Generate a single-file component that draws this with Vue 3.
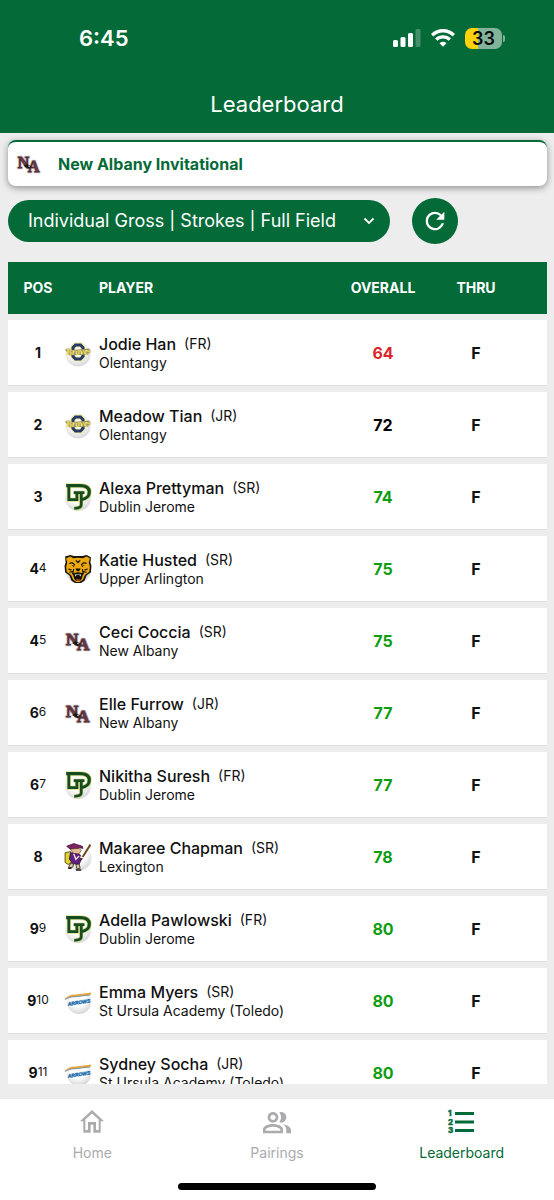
<script setup>
import { ref } from 'vue'

const view = ref('gross')

const players = [
  { pos: 1, order: '', name: 'Jodie Han', year: 'FR', school: 'Olentangy', logo: 'olentangy', score: 64, tone: 'under' },
  { pos: 2, order: '', name: 'Meadow Tian', year: 'JR', school: 'Olentangy', logo: 'olentangy', score: 72, tone: 'even' },
  { pos: 3, order: '', name: 'Alexa Prettyman', year: 'SR', school: 'Dublin Jerome', logo: 'jerome', score: 74, tone: 'over' },
  { pos: 4, order: '4', name: 'Katie Husted', year: 'SR', school: 'Upper Arlington', logo: 'arlington', score: 75, tone: 'over' },
  { pos: 4, order: '5', name: 'Ceci Coccia', year: 'SR', school: 'New Albany', logo: 'albany', score: 75, tone: 'over' },
  { pos: 6, order: '6', name: 'Elle Furrow', year: 'JR', school: 'New Albany', logo: 'albany', score: 77, tone: 'over' },
  { pos: 6, order: '7', name: 'Nikitha Suresh', year: 'FR', school: 'Dublin Jerome', logo: 'jerome', score: 77, tone: 'over' },
  { pos: 8, order: '', name: 'Makaree Chapman', year: 'SR', school: 'Lexington', logo: 'lexington', score: 78, tone: 'over' },
  { pos: 9, order: '9', name: 'Adella Pawlowski', year: 'FR', school: 'Dublin Jerome', logo: 'jerome', score: 80, tone: 'over' },
  { pos: 9, order: '10', name: 'Emma Myers', year: 'SR', school: 'St Ursula Academy (Toledo)', logo: 'ursula', score: 80, tone: 'over' },
  { pos: 9, order: '11', name: 'Sydney Socha', year: 'JR', school: 'St Ursula Academy (Toledo)', logo: 'ursula', score: 80, tone: 'over' },
]
</script>

<template>
  <div class="screen">
    <svg class="defs" width="0" height="0" aria-hidden="true">
      <defs>
        <radialGradient id="ball" cx="0.45" cy="0.35" r="0.65">
          <stop offset="0.5" stop-color="#fff" />
          <stop offset="1" stop-color="#d6d6da" />
        </radialGradient>
        <symbol id="logo-albany" viewBox="0 0 28 28">
          <g font-family="Liberation Serif, serif" font-weight="700" stroke-linejoin="round">
            <g fill="#c9bfc1" stroke="#c9bfc1" stroke-width="2.600">
              <text x="2" y="18" font-size="17">N</text>
              <text x="13" y="23" font-size="17">A</text>
            </g>
            <g fill="#6f3740" stroke="#54303a" stroke-width="0.900">
              <text x="2" y="18" font-size="17">N</text>
              <text x="13" y="23" font-size="17">A</text>
            </g>
          </g>
          <path d="M8 16l4-2 5 3-3 2.500z" fill="#1d1517" />
          <path d="M13 16l2 1" stroke="#fff" stroke-width="0.800" />
        </symbol>
        <symbol id="logo-olentangy" viewBox="0 0 28 28">
          <circle cx="14" cy="15" r="12.500" fill="url(#ball)" />
          <path d="M11.500 6h5l2.500 2.500v9L16.500 20h-5L9 17.500v-9z" fill="#fff" stroke="#f0e79a" stroke-width="5" />
          <path d="M11.500 6h5l2.500 2.500v9L16.500 20h-5L9 17.500v-9z" fill="none" stroke="#263a66" stroke-width="3" />
          <path d="M1 10.500q4-2 7 .5l17-1.500 2 2.500-2.500 3.500L5 16.500z" fill="#9a9560" />
          <text x="2" y="15.500" font-family="Liberation Serif, serif" font-size="9" font-style="italic" font-weight="700" fill="#f8e36b" transform="rotate(-3 14 14)">Braves</text>
        </symbol>
        <symbol id="logo-jerome" viewBox="0 0 26 26">
          <circle cx="13" cy="14" r="12" fill="url(#ball)" />
          <g fill="none" stroke-linejoin="miter">
            <path d="M2 2.500H15c6 0 8.500 2.500 8.500 6s-3 6.500-8 7" stroke="#dfe29a" stroke-width="4.600" />
            <path d="M4.500 2v13.500h7.500V9H9M12 9h7M16 9v11.500q0 3-6.500 3" stroke="#dfe29a" stroke-width="4.200" />
            <path d="M2 2.500H15c6 0 8.500 2.500 8.500 6s-3 6.500-8 7" stroke="#174d1e" stroke-width="3" />
            <path d="M4.500 2v13.500h7.500V9H9M12 9h7M16 9v11.500q0 3-6.500 3" stroke="#174d1e" stroke-width="2.600" />
          </g>
        </symbol>
        <symbol id="logo-arlington" viewBox="0 0 26 26">
          <circle cx="13" cy="14" r="12" fill="url(#ball)" />
          <path d="M1 1.500l5-1.500 3 1h8l4-1 4 2-.5 5 1 3-.5 6-4 3-2 5-4 2.500h-4L7 24l-2-5-4-3-.5-6 1-3z" fill="#17130a" />
          <path d="M2 3l4-1.500L8.500 3 13 2.500 17.500 3 21 1.500 24 3l-1 4 1 4-.5 4.500-4 3-2 4.500-3 2h-3l-3-2-2-4.500-4-3L2 11l1-4z" fill="#eca90f" />
          <path d="M5 8q3-2 5 1.500M21 8q-3-2-5 1.500M11 5l2 2 2-2M4 13l3 1M22 13l-3 1M5 16l3-.5M21 16l-3-.5M9 13l-1 5M17 13l1 5" fill="none" stroke="#17130a" stroke-width="1.100" />
          <path d="M7 9.500l3 .5-1 1.200zM19 9.500l-3 .5 1 1.200zM10.500 12.500h5L14 15h-2zM8 17l5-1 5 1-1.500 5-1.500 2h-4l-1.500-2z" fill="#17130a" />
          <path d="M10 18l.8 2 .8-1.500h2.800l.8 1.500.8-2z" fill="#fff" />
          <path d="M11 22.500h4l-1 1.500h-2z" fill="#b9532a" />
        </symbol>
        <symbol id="logo-lexington" viewBox="0 0 26 26">
          <circle cx="14" cy="14" r="11.500" fill="url(#ball)" />
          <path d="M24.500 1.500L16 15l-2 1" fill="none" stroke="#6c4a20" stroke-width="1.800" />
          <path d="M1 9l5-1 2 9-4 3-3-2z" fill="#dfd22a" stroke="#4c4511" stroke-width="0.800" />
          <path d="M2.500 3L9 .5l8 2.500.5 2-3-.5-4 1.500-5-.5z" fill="#7b2464" stroke="#401238" stroke-width="0.700" />
          <path d="M6 5.500l8-.5 2 2-2 3-5 .5z" fill="#e8bd94" stroke="#57351f" stroke-width="0.600" />
          <path d="M6 9l5 1 4 1 1 4-2 5-6-1-3-4z" fill="#642080" stroke="#2e1146" stroke-width="0.800" />
          <path d="M9 10l2 5 3-3M15 13l4 1" fill="none" stroke="#f0e9dd" stroke-width="1.300" />
          <path d="M6 19l3 .5-1 3-4 .5zM11 20l3-.5 1 4-3 .5z" fill="#d8c9a7" stroke="#3c2a20" stroke-width="0.800" />
          <path d="M4 23.500h3M11 25h5" stroke="#241a18" stroke-width="1.400" />
        </symbol>
        <symbol id="logo-ursula" viewBox="0 0 28 28">
          <circle cx="15" cy="15" r="12" fill="url(#ball)" />
          <path d="M0 12.500Q5 7 12 7.500L27.500 5.500l-1 2.500-13 1.500Q6 9.500 0 12.500z" fill="#e9a43a" />
          <path d="M1 12.500q6-3.500 12-3l13-1.500" fill="none" stroke="#5d87ac" stroke-width="0.800" />
          <path d="M4 15l22-4-1 4-20 4z" fill="#d3e5f1" />
          <text x="4" y="19" font-family="Liberation Sans, sans-serif" font-size="5" font-style="italic" font-weight="700" fill="#1767a8" stroke="#1767a8" stroke-width="0.300" transform="rotate(-9 4 19)">ARROWS</text>
        </symbol>
      </defs>
    </svg>

    <header class="top">
      <div class="status">
        <span class="clock">6:45</span>
        <div class="indicators">
          <svg width="28" height="18" viewBox="0 0 28 18" fill="#fff" aria-label="Signal">
            <rect x="0" y="11" width="5" height="7" rx="1.500" />
            <rect x="7.500" y="8" width="5" height="10" rx="1.500" />
            <rect x="15" y="4" width="5" height="14" rx="1.500" />
            <rect x="22.500" y="0" width="5" height="18" rx="1.500" opacity="0.250" />
          </svg>
          <svg width="24" height="18" viewBox="0 0 24 18" fill="none" stroke="#fff" stroke-width="3.400" aria-label="Wi-Fi">
            <path d="M1.200 6.200a15.500 15.500 0 0 1 21.600 0" />
            <path d="M5.200 10.600a9.800 9.800 0 0 1 13.600 0" />
            <path d="M8.500 14.200q3.500-2.800 7 0L12 17.800z" fill="#fff" stroke="none" />
          </svg>
          <div class="battery"><span>33</span></div>
        </div>
      </div>
      <h1>Leaderboard</h1>
    </header>

    <main>
      <a class="event" href="#event">
        <svg width="26" height="26" aria-hidden="true"><use href="#logo-albany" /></svg>
        <span>New Albany Invitational</span>
      </a>

      <div class="filters">
        <div class="picker">
          <select v-model="view" aria-label="Leaderboard view">
            <option value="gross">Individual Gross | Strokes | Full Field</option>
          </select>
          <svg width="12" height="8" viewBox="0 0 12 8" fill="none" stroke="#fff" stroke-width="1.800" aria-hidden="true">
            <path d="M1.500 1.500L6 6l4.500-4.500" />
          </svg>
        </div>
        <button class="refresh" type="button" aria-label="Refresh">
          <svg width="28" height="28" viewBox="0 0 24 24" fill="#fff">
            <path d="M17.650 6.350A7.960 7.960 0 0 0 12 4a8 8 0 1 0 7.730 10h-2.080A6 6 0 1 1 12 6c1.660 0 3.140.69 4.220 1.780L13 11h7V4z" />
          </svg>
        </button>
      </div>

      <div class="board">
        <table>
          <thead>
            <tr>
              <th class="pos" scope="col">POS</th>
              <th class="player" scope="col">PLAYER</th>
              <th class="overall" scope="col">OVERALL</th>
              <th class="thru" scope="col">THRU</th>
            </tr>
          </thead>
          <tbody>
            <tr v-for="p in players" :key="p.name">
              <td class="pos"><b>{{ p.pos }}</b><sup v-if="p.order">{{ p.order }}</sup></td>
              <td class="player">
                <div class="entry">
                  <svg class="logo" width="28" height="28" aria-hidden="true"><use :href="'#logo-' + p.logo" /></svg>
                  <div class="who">
                    <div class="name">{{ p.name }}<span>({{ p.year }})</span></div>
                    <div class="school">{{ p.school }}</div>
                  </div>
                </div>
              </td>
              <td class="overall" :class="p.tone">{{ p.score }}</td>
              <td class="thru">F</td>
            </tr>
          </tbody>
        </table>
      </div>
    </main>

    <nav>
      <div class="tabs">
        <a href="#home">
          <svg width="32" height="32" viewBox="0 0 24 24" fill="currentColor" aria-hidden="true">
            <path d="M12 5.690l5 4.500V18h-2v-6H9v6H7v-7.810l5-4.500M12 3L3 11.500h2.500V20h5.500v-6h2v6h5.500v-8.500H21z" />
          </svg>
          <span>Home</span>
        </a>
        <a href="#pairings">
          <svg width="32" height="32" viewBox="0 0 24 24" fill="currentColor" aria-hidden="true">
            <path d="M16.500 13.630C18.030 14.670 19 16 19 18v2.500h3.500v-2.500c0-2.400-3-3.900-6-4.370zM9 12.500c2.210 0 4-1.790 4-4s-1.790-4-4-4-4 1.790-4 4 1.790 4 4 4zm0-6c1.100 0 2 .9 2 2s-.9 2-2 2-2-.9-2-2 .9-2 2-2zM15 12.500c2.210 0 4-1.790 4-4s-1.790-4-4-4c-.47 0-.91.100-1.330.240C14.500 5.770 15 7.080 15 8.500s-.5 2.730-1.330 3.760c.42.140.86.240 1.330.240zM9 13.500c-2.670 0-7.500 1.340-7.500 4v3h15v-3c0-2.660-4.830-4-7.500-4zm5.500 5h-11v-.99C3.700 16.790 6.300 15.500 9 15.500s5.300 1.290 5.500 2z" />
          </svg>
          <span>Pairings</span>
        </a>
        <a class="active" href="#leaderboard" aria-current="page">
          <svg width="32" height="32" viewBox="0 0 32 32" fill="none" stroke="currentColor" aria-hidden="true">
            <path d="M9 7.500h19M9 16h19M9 24.500h19" stroke-width="3" />
            <g fill="currentColor" stroke="currentColor" stroke-width="0.400" font-family="Inter, sans-serif" font-size="8" font-weight="800">
              <text x="2" y="10">1</text>
              <text x="2" y="19">2</text>
              <text x="2" y="27">3</text>
            </g>
          </svg>
          <span>Leaderboard</span>
        </a>
      </div>
      <div class="homebar"></div>
    </nav>
  </div>
</template>

<style>
body {
  margin: 0;
  background: #ededed;
}
</style>

<style scoped>
.screen {
  --green: #046a38;
  display: flex;
  flex-direction: column;
  height: 100vh;
  background: #ededed;
  color: #111;
  font-family: Inter, "Liberation Sans", sans-serif;
}

.defs {
  position: absolute;
}

.top {
  flex: none;
  box-sizing: border-box;
  height: 133px;
  background: var(--green);
  color: #fff;
}

.status {
  display: flex;
  align-items: center;
  justify-content: space-between;
  height: 76px;
  padding: 0 48px 0 79px;
}

.clock {
  font-size: 22px;
  font-weight: 600;
}

.indicators {
  display: flex;
  align-items: center;
  gap: 10px;
}

.battery {
  position: relative;
  width: 37px;
  height: 21px;
  margin: 0 4px 0 0;
  border-radius: 7px;
  background: linear-gradient(90deg, #fdd20b 35%, #82b49b 35%);
  color: #0a0a0a;
  font-size: 18px;
  font-weight: 600;
  line-height: 21px;
  text-align: center;
}

.battery::after {
  content: "";
  position: absolute;
  top: 7px;
  right: -3px;
  width: 2px;
  height: 7px;
  border-radius: 0 3px 3px 0;
  background: #82b49b;
}

h1 {
  margin: 0;
  font-size: 22px;
  font-weight: 400;
  line-height: 56px;
  text-align: center;
}

main {
  display: flex;
  flex: 1;
  flex-direction: column;
  min-height: 0;
  padding: 7px 7px 15px 8px;
}

.event {
  display: flex;
  flex: none;
  align-items: center;
  gap: 16px;
  box-sizing: border-box;
  height: 46px;
  padding: 0 8px;
  border-top: 2px solid var(--green);
  border-radius: 8px;
  background: #fff;
  box-shadow: 0 2px 7px rgba(0, 0, 0, 0.4);
  color: var(--green);
  font-size: 16px;
  font-weight: 700;
  text-decoration: none;
}

.filters {
  display: flex;
  flex: none;
  align-items: center;
  gap: 22px;
  margin-top: 12px;
}

.picker {
  position: relative;
  flex: 0 1 382px;
  min-width: 0;
}

.picker select {
  display: block;
  width: 100%;
  height: 42px;
  padding: 0 44px 2px 20px;
  border: 0;
  border-radius: 21px;
  appearance: none;
  background: var(--green);
  color: #fff;
  font: 400 18px Inter, "Liberation Sans", sans-serif;
}

.picker svg {
  position: absolute;
  top: 17px;
  right: 15px;
  pointer-events: none;
}

.refresh {
  display: grid;
  flex: none;
  place-items: center;
  width: 46px;
  height: 46px;
  padding: 0;
  border: 0;
  border-radius: 50%;
  background: var(--green);
}

.board {
  flex: 1;
  min-height: 0;
  margin-top: 12px;
  overflow: auto;
  scrollbar-width: none;
}

table {
  width: 100%;
  table-layout: fixed;
  border-collapse: separate;
  border-spacing: 0 6px;
}

th {
  box-sizing: border-box;
  height: 52px;
  padding: 0 0 2px;
  background: var(--green);
  color: #fff;
  font-size: 14px;
  font-weight: 700;
  text-align: center;
}

td {
  box-sizing: border-box;
  height: 66px;
  padding: 0;
  border-bottom: 1px solid #dcdfe2;
  background: #fff;
  text-align: center;
}

.pos {
  box-sizing: border-box;
  width: 52px;
  padding-left: 8px;
  white-space: nowrap;
}

td.pos {
  font-size: 14px;
}

sup {
  font-size: 12px;
  line-height: 0;
  vertical-align: 2px;
}

.player {
  text-align: left;
}

th.player {
  padding-left: 39px;
}

.entry {
  display: flex;
  align-items: center;
  gap: 7px;
  padding-left: 4px;
}

.logo {
  flex: none;
}

.name {
  font-size: 16px;
  font-weight: 500;
  line-height: 20px;
  white-space: nowrap;
}

.name span {
  margin-left: 8px;
  font-size: 14px;
  font-weight: 400;
  vertical-align: 1px;
}

.school {
  font-size: 14px;
  line-height: 18px;
  white-space: nowrap;
}

.overall {
  box-sizing: border-box;
  width: 100px;
}

td.overall,
td.thru {
  font-size: 16px;
  font-weight: 700;
}

.thru {
  box-sizing: border-box;
  width: 114px;
  padding-right: 28px;
}

.under {
  color: #d9252b;
}

.even {
  color: #000;
}

.over {
  color: #0f9d12;
}

nav {
  flex: none;
  background: #fff;
}

.tabs {
  display: grid;
  grid-template-columns: repeat(3, 1fr);
  height: 84px;
}

.tabs a {
  display: flex;
  flex-direction: column;
  align-items: center;
  gap: 6px;
  padding-top: 7px;
  color: #ababad;
  font-size: 14px;
  line-height: 17px;
  text-decoration: none;
}

.tabs a.active {
  color: var(--green);
}

.homebar {
  width: 198px;
  height: 7px;
  margin: 0 auto 10px;
  border-radius: 4px;
  background: #000;
}
</style>
